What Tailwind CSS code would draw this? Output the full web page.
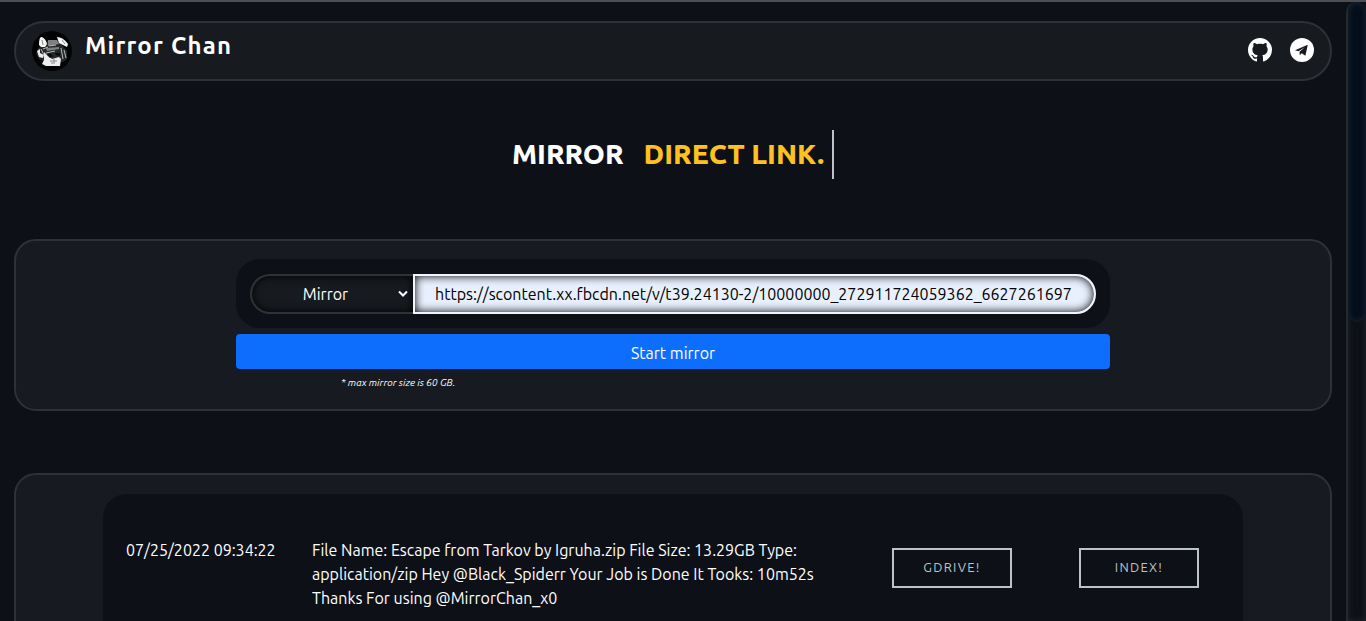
<!DOCTYPE html>
<html lang="en">
<head>
<meta charset="utf-8">
<title>Mirror Chan</title>
<script src="https://cdn.jsdelivr.net/npm/@tailwindcss/browser@4"></script>
</head>
<body class="bg-[#0d1017] text-white font-['Ubuntu','Noto_Sans',sans-serif] text-base leading-6">
<div class="flex h-screen overflow-hidden border-t-2 border-[#4c4e52]">
  <div class="flex-1 overflow-hidden px-3.5 pt-[19px]">
    <header class="flex h-[60px] items-center justify-between rounded-full border-2 border-[#2e3137] bg-[#171b20] px-4">
      <a href="#" class="flex items-center gap-[13px]">
        <svg class="size-10" viewBox="0 0 40 40" aria-hidden="true">
          <circle cx="20" cy="20" r="20" fill="#020303"/>
          <path d="M6 17L13 14L16 9H25L31 15L35 20L35 28L31 31L12 30L7 28L4 23Z" fill="#252829"/>
          <path d="M16 9H25L27 13L16 15ZM14 17L27 16V18L15 20Z" fill="#7d8182"/>
          <path d="M7 14Q7 5 10 6Q14 8 15 13L13 16L9 16ZM25 6Q31 6 36 13L35 16L31 14L27 12Z" fill="#f5f5f5"/>
          <path d="M5 20L8 18L8 22L12 24L11 27L7 26ZM12 21L15 24L17 25L20 28L27 26L29 28L28 35H14L10 33L12 29Z" fill="#ececec"/>
          <path d="M11 18L16 16M14 22L23 20M29 17L31 28M32 19L34 27M9 18L12 24M17 15L24 14" stroke="#b8bcbc" stroke-width="1" fill="none"/>
          <path d="M15 24L18 22L21 25L18 27ZM23 22H28V25L24 24Z" fill="#090a0a"/>
          <path d="M18 30H25M19 32H23M22 28V31M10 9L11 14M30 9L33 13" stroke="#858989" stroke-width="1" fill="none"/>
        </svg>
        <span class="pb-2.5 text-2xl font-semibold tracking-wider">Mirror Chan</span>
      </a>
      <nav class="flex gap-[18px] pb-0.5">
        <a href="#" aria-label="GitHub"><svg class="size-6" viewBox="0 0 16 16" fill="white"><path d="M8 0C3.58 0 0 3.58 0 8c0 3.54 2.29 6.53 5.47 7.59.4.07.55-.17.55-.38 0-.19-.01-.82-.01-1.49-2.01.37-2.53-.49-2.69-.94-.09-.23-.48-.94-.82-1.13-.28-.15-.68-.52-.01-.53.63-.01 1.08.58 1.23.82.72 1.21 1.87.87 2.33.66.07-.52.28-.87.51-1.07-1.78-.2-3.64-.89-3.64-3.95 0-.87.31-1.59.82-2.15-.08-.2-.36-1.02.08-2.12 0 0 .67-.21 2.2.82.64-.18 1.32-.27 2-.27s1.36.09 2 .27c1.53-1.04 2.2-.82 2.2-.82.44 1.1.16 1.92.08 2.12.51.56.82 1.27.82 2.15 0 3.07-1.87 3.75-3.65 3.95.29.25.54.73.54 1.48 0 1.07-.01 1.93-.01 2.2 0 .21.15.46.55.38A8.01 8.01 0 0 0 16 8c0-4.42-3.58-8-8-8z"/></svg></a>
        <a href="#" aria-label="Telegram"><svg class="size-6" viewBox="0 0 24 24"><circle cx="12" cy="12" r="12" fill="white"/><path d="M5 12.2L17.8 6.8L15.4 17.8L11.7 15.2L9.8 17.2L9.5 13.8L14.8 9.2L8.4 13.2Z" fill="#171b20"/></svg></a>
      </nav>
    </header>

    <h1 class="mt-[49px] flex h-[49px] items-center justify-center text-[28px] font-extrabold">
      <span class="pb-0.5">MIRROR</span>
      <span class="ml-5 flex h-full items-center border-r-2 border-[#bdc3c7] pr-2 pb-0.5 text-[#ffc021]">DIRECT LINK.</span>
    </h1>

    <main>
      <section class="mt-[60px] rounded-[22px] border-2 border-[#2e3137] bg-[#171b21] px-4 pt-[18px] pb-4">
        <form class="mx-auto max-w-[874px]">
          <div class="flex rounded-3xl bg-[#0d1017] px-3.5 pt-[15px] pb-3.5">
            <div class="relative w-[163px] shrink-0">
              <select aria-label="Action" class="h-10 w-full appearance-none rounded-l-full border-2 border-r-0 border-[#303236] bg-[#171b20] pr-3.5 text-center shadow-[inset_0_0_10px_#000]"><option>Mirror</option></select>
              <svg class="pointer-events-none absolute right-1 top-4 h-2 w-3" viewBox="0 0 12 8" fill="none" stroke="white" stroke-width="2"><path d="M2 1.5L6 5.5L10 1.5"/></svg>
            </div>
            <input aria-label="Link" value="https://scontent.xx.fbcdn.net/v/t39.24130-2/10000000_272911724059362_6627261697" class="h-10 min-w-0 flex-1 rounded-r-full border-2 border-[#f2f5fc] bg-[#e8f0fe] px-5 text-black shadow-[inset_0_0_10px_#000]">
          </div>
          <button type="button" class="mt-1.5 h-[35px] w-full rounded bg-[#0d6efd] pt-0.5">Start mirror</button>
          <p class="ml-[105px] mt-1 h-5 text-[10px] italic leading-5">* max mirror size is 60 GB.</p>
        </form>
      </section>

      <section class="mt-[62px] rounded-[22px] border-2 border-[#2e3137] bg-[#171b21] px-4 py-[19px]">
        <div class="mx-auto grid max-w-[1140px] grid-cols-[186px_1fr_187px_164px] rounded-3xl bg-[#0d1017] pl-[23px] pt-[44px] pb-16">
          <time>07/25/2022 09:34:22</time>
          <p class="pr-16">File Name: Escape from Tarkov by Igruha.zip File Size: 13.29GB Type: application/zip Hey @Black_Spiderr Your Job is Done It Tooks: 10m52s Thanks For using @MirrorChan_x0</p>
          <div class="pt-2.5"><button type="button" class="h-10 w-[120px] border-2 border-[#bdc3c7] pb-0.5 text-[13px] tracking-widest text-[#bdc3c7]">GDRIVE!</button></div>
          <div class="pt-2.5"><button type="button" class="h-10 w-[120px] border-2 border-[#bdc3c7] pb-0.5 text-[13px] tracking-widest text-[#bdc3c7]">INDEX!</button></div>
        </div>
      </section>
    </main>
  </div>
  <div class="w-5 rounded-t-full border-l-2 border-[#25282d] bg-[#0d1017] shadow-[inset_0_0_6px_#25282d]" aria-hidden="true">
    <div class="h-[320px] rounded-full bg-[#040e1c] shadow-[inset_0_0_6px_#202832]"></div>
  </div>
</div>
</body>
</html>
